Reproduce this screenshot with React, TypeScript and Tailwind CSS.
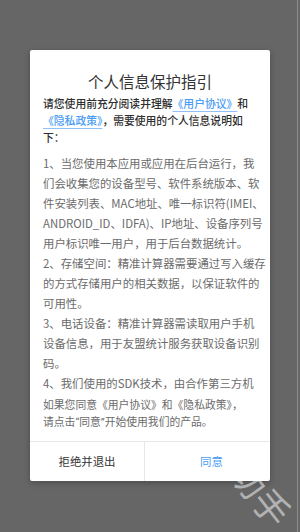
const font = { fontFamily: '"Noto Sans CJK SC", "Noto Sans", sans-serif' };

const intro = ['请您使用前充分阅读并理解', '《隐私政策》', '下：'];

const paragraphs = [
  [
    '1、当您使用本应用或应用在后台运行，我',
    '们会收集您的设备型号、软件系统版本、软',
    '件安装列表、MAC地址、唯一标识符(IMEI、',
    'ANDROID_ID、IDFA)、IP地址、设备序列号',
    '用户标识唯一用户，用于后台数据统计。',
  ],
  ['2、存储空间：精准计算器需要通过写入缓存', '的方式存储用户的相关数据，以保证软件的', '可用性。'],
  ['3、电话设备：精准计算器需读取用户手机', '设备信息，用于友盟统计服务获取设备识别', '码。'],
  ['4、我们使用的SDK技术，由合作第三方机'],
];

const Link = ({ children }: { children: string }) => (
  <span className="text-[#4b9cf5] underline decoration-[#8fc0f7] underline-offset-[3px]">{children}</span>
);

const Quote = ({ children }: { children: string }) => (
  <span style={{ fontFamily: 'Roboto, sans-serif' }}>{children}</span>
);

const App = () => {
  return (
    <div className="relative w-[300px] h-[532px] overflow-hidden bg-[#666666] flex justify-center" style={font}>
      <div className="mt-[50px] w-[240px] h-[431px] bg-white rounded-[2px] shadow-[0_2px_6px_rgba(0,0,0,0.25)] flex flex-col">
        <h1 className="pt-[20px] text-center text-[15.5px] leading-[22px] text-[#333333]">
          个人信息保护指引
        </h1>

        <div className="mt-[3px] px-[13px] text-[10.8px] leading-[17px] font-medium text-[#2e2e2e] whitespace-nowrap">
          <div>
            {intro[0]}
            <Link>《用户协议》</Link>和
          </div>
          <div>
            <Link>{intro[1]}</Link>，需要使用的个人信息说明如
          </div>
          <div>{intro[2]}</div>
        </div>

        <div className="mt-[7px] h-[240px] overflow-hidden px-[13px] text-[11.4px] leading-[20px] text-[#6b6b6b] whitespace-nowrap">
          {paragraphs.map((lines, i) => (
            <div key={i}>
              {lines.map((line) => (
                <div key={line}>{line}</div>
              ))}
            </div>
          ))}
        </div>

        <div className="mt-[3px] px-[13px] text-[10.8px] leading-[16.7px] text-[#6b6b6b] whitespace-nowrap">
          <div>如果您同意《用户协议》和《隐私政策》，</div>
          <div>
            请点击<Quote>“</Quote>同意<Quote>”</Quote>开始使用我们的产品。
          </div>
        </div>

        <div className="mt-[10px] flex-1 flex border-t border-[#e6e6e6]">
          <button className="w-[115px] flex items-center justify-center text-[11.4px] text-[#333333] border-r border-[#e6e6e6]">
            拒绝并退出
          </button>
          <button className="flex-1 flex items-center justify-center pl-[8px] text-[11.4px] text-[#4b9cf5]">
            同意
          </button>
        </div>
      </div>

      {/* screen edge */}
      <div className="absolute top-0 right-[2px] w-px h-full bg-[#8c8c8c]" />

      {/* watermark */}
      <div className="absolute left-[226px] top-[474px] rotate-[52deg] text-[36px] leading-none text-white/50 whitespace-nowrap pointer-events-none">
        助手
      </div>
    </div>
  );
};

export default App;
